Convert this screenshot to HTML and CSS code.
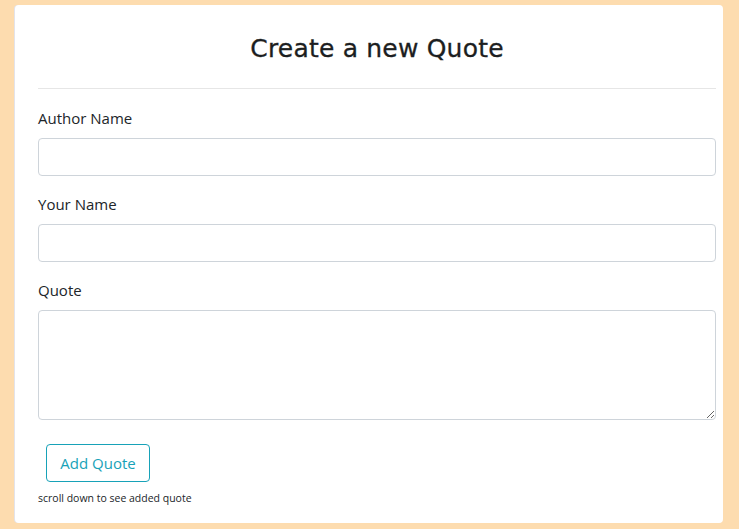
FILE: index.html
```html
<!DOCTYPE html>
<html>
<head>
<meta charset="utf-8">
<link rel="stylesheet" href="styles.css">
</head>
<body>
<div class="card">
  <div class="card-head">
    <h2 class="title">Create a new Quote</h2>
  </div>
  <form class="form">
    <div class="group">
      <label class="label">Author Name</label>
      <input class="field" type="text">
    </div>
    <div class="group">
      <label class="label">Your Name</label>
      <input class="field" type="text">
    </div>
    <div class="group">
      <label class="label">Quote</label>
      <textarea class="field area"></textarea>
    </div>
    <button class="btn" type="button">Add Quote</button>
    <p class="hint">scroll down to see added quote</p>
  </form>
</div>
</body>
</html>
```
FILE: styles.css
```css
html, body { margin: 0; }
body {
  background: #fddcaf;
  padding: 5px 16px 6px 15px;
  font-family: "Open Sans", "Noto Sans", sans-serif;
  color: #212529;
}
.card {
  background: #fff;
  border-radius: 4px;
  height: 518px;
  box-sizing: border-box;
  padding: 0 7px 0 23px;
  box-shadow: -1px 0 0 #e3e3ea;
}
.card-head {
  height: 84px;
  box-sizing: border-box;
  padding-top: 26px;
  border-bottom: 1px solid #e6e6e6;
}
.title {
  margin: 0;
  text-align: center;
  font-family: "Comic Sans MS", "DejaVu Sans", sans-serif;
  font-weight: normal;
  font-size: 25px;
  line-height: 36px;
  color: #1c1e21;
  letter-spacing: 0.2px;
  -webkit-text-stroke: 0.3px #1c1e21;
}
.form { padding-top: 17px; }
.group { margin-bottom: 16px; }
.label {
  display: block;
  font-size: 15px;
  line-height: 24px;
  margin-bottom: 8px;
}
.field {
  display: block;
  width: 100%;
  box-sizing: border-box;
  height: 38px;
  border: 1px solid #ced4da;
  border-radius: 4px;
  margin: 0;
  font: inherit;
}
.area {
  height: 110px;
  resize: vertical;
}
.btn {
  margin: 8px 0 0 8px;
  height: 38px;
  width: 104px;
  background: #fff;
  border: 1px solid #17a2b8;
  color: #17a2b8;
  border-radius: 4px;
  font-family: "Open Sans", "Noto Sans", sans-serif;
  font-size: 15px;
  padding: 0;
}
.hint {
  margin: 8px 0 0;
  font-size: 10.5px;
  line-height: 16px;
}
```
